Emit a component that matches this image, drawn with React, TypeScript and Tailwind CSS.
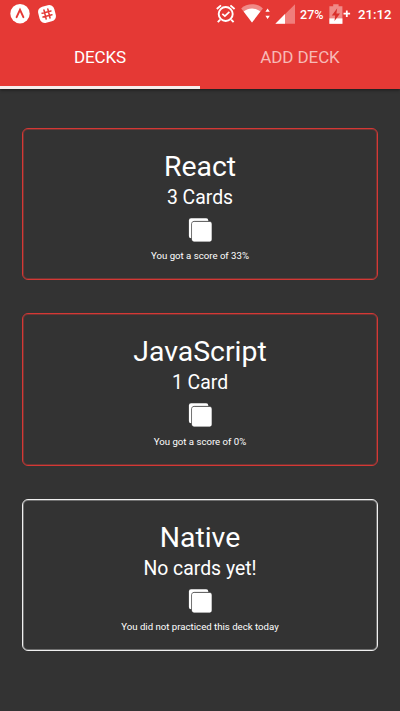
import type { ReactNode } from "react";

type Deck = { title: string; count: string; note: string; done: boolean };

const decks: Deck[] = [
  { title: "React", count: "3 Cards", note: "You got a score of 33%", done: true },
  { title: "JavaScript", count: "1 Card", note: "You got a score of 0%", done: true },
  { title: "Native", count: "No cards yet!", note: "You did not practiced this deck today", done: false },
];

function CardsIcon() {
  return (
    <svg className="block" width="24" height="24" viewBox="0 0 24 24">
      <rect x="0.9" y="0.2" width="19.4" height="20" rx="2.2" fill="#fff" />
      <rect x="3.7" y="3.4" width="20" height="20" rx="2.4" fill="#fff" stroke="#555" strokeWidth="1" />
      <rect x="4.1" y="3.9" width="19.5" height="19.6" rx="2" fill="#fff" />
    </svg>
  );
}

function ExpoIcon() {
  return (
    <svg width="20" height="20" viewBox="0 0 20 20">
      <circle cx="10" cy="9.7" r="9.7" fill="#fff" />
      <path d="M6.6 13.2 L10 5.8 L13.4 13.2" fill="none" stroke="#e53935" strokeWidth="1.9" strokeLinecap="round" strokeLinejoin="miter" />
    </svg>
  );
}

function HashIcon() {
  return (
    <svg width="18" height="18" viewBox="0 0 18 18">
      <g transform="rotate(-14 9 9)">
        <rect x="0.7" y="0.7" width="16.6" height="16.6" rx="5.4" fill="#fff" />
        <path d="M7 4.4V13.6M11 4.4V13.6M4.4 7H13.6M4.4 11H13.6" stroke="#e53935" strokeWidth="1.5" strokeLinecap="round" />
      </g>
    </svg>
  );
}

function AlarmIcon() {
  return (
    <svg width="20" height="20" viewBox="0 0 20 20" fill="none" stroke="#fff">
      <circle cx="9.7" cy="10" r="7" strokeWidth="1.9" />
      <path d="M0.8 5 L5 1.4 M18.6 5 L14.4 1.4 M4.2 15.6 L1.8 18.2 M15.2 15.6 L17.6 18.2" strokeWidth="1.9" />
      <path d="M6.3 9.8 L8.9 12.2 L13.4 7.8" strokeWidth="1.7" />
    </svg>
  );
}

function WifiIcon() {
  return (
    <svg width="30" height="20" viewBox="0 0 30 20">
      <path d="M0.2 4.4 C6 -1.2 16 -1.2 21.9 4.4 L11 18.4Z" fill="#f08a87" />
      <path d="M2.7 7.6 C7.4 3.6 14.6 3.6 19.3 7.6 L11 18.4Z" fill="#fff" />
      <path d="M24.4 7.7 L26.6 4.4 L28.8 7.7Z M24.4 11.8 L26.6 15.1 L28.8 11.8Z" fill="#fff" />
    </svg>
  );
}

function SignalIcon() {
  return (
    <svg width="20" height="20" viewBox="0 0 20 20">
      <path d="M0.4 19.7 L20 0.2 V19.7Z" fill="#f07e7b" />
      <path d="M0.4 19.7 L10 10.1 V19.7Z" fill="#fff" />
    </svg>
  );
}

function BatteryIcon() {
  return (
    <svg width="22" height="20" viewBox="0 0 22 20">
      <path d="M4.2 0.2 H9.6 V2.2 H13.4 V19.8 H0.4 V2.2 H4.2Z" fill="#f08a87" />
      <path d="M0.4 14.4 H13.4 V19.8 H0.4Z" fill="#fff" />
      <path d="M8.2 4.2 L2.8 11.6 H6.2 L5.5 17 L11 9.4 H7.4Z" fill="#d9302c" />
      <path d="M14.5 9.7 H21.1 M17.8 6.4 V13" stroke="#fff" strokeWidth="1.8" />
    </svg>
  );
}

function Tab({ children, active = false }: { children: ReactNode; active?: boolean }) {
  return (
    <button
      className={`flex h-full flex-1 items-center justify-center border-b-[3px] text-[17px] leading-5 tracking-[-0.1px] ${
        active ? "border-[#f5eeee] text-white" : "border-transparent text-[#f7b9b7]"
      }`}
    >
      {children}
    </button>
  );
}

function DeckCard({ deck }: { deck: Deck }) {
  return (
    <section
      className={`flex h-[152.5px] flex-col items-center rounded-[6px] border pt-[21px] text-white ${
        deck.done
          ? "border-[#d53835] shadow-[inset_0_0_0_1px_rgba(224,56,53,0.35)]"
          : "border-[#f0f0f0] shadow-[inset_0_0_0_1px_rgba(255,255,255,0.3)]"
      }`}
    >
      <h2 className="text-[28.4px] leading-[34px]">{deck.title}</h2>
      <p className="pt-[0.4px] text-[19.4px] leading-7">{deck.count}</p>
      <div className="pt-[6px]">
        <CardsIcon />
      </div>
      <p className="pt-[8.2px] text-[9.65px] leading-3">{deck.note}</p>
    </section>
  );
}

export default function App() {
  return (
    <main className="flex h-[711px] w-[400px] flex-col overflow-hidden bg-[#333333] font-['Roboto',sans-serif]">
      <header className="flex h-[89px] shrink-0 flex-col bg-[#e53935] shadow-[0_1px_3px_rgba(0,0,0,0.5)]">
        <div className="flex h-[28px] shrink-0 items-center justify-between pl-[10px] pr-[8.5px] text-white">
          <div className="flex items-center gap-[8px]">
            <ExpoIcon />
            <HashIcon />
          </div>
          <div className="flex items-center text-[12.5px] font-medium">
            <AlarmIcon />
            <span className="w-[5px]" />
            <WifiIcon />
            <span className="w-[4px]" />
            <SignalIcon />
            <span className="w-[5px]" />
            <span className="pt-[2px]">27%</span>
            <span className="w-[5px]" />
            <BatteryIcon />
            <span className="w-[7.5px]" />
            <span className="pt-[2px] text-[13.2px]">21:12</span>
          </div>
        </div>
        <nav className="flex flex-1">
          <Tab active>DECKS</Tab>
          <Tab>ADD DECK</Tab>
        </nav>
      </header>
      <div className="flex flex-col gap-[33px] px-[22px] pt-[38.5px]">
        {decks.map((deck) => (
          <DeckCard key={deck.title} deck={deck} />
        ))}
      </div>
    </main>
  );
}
